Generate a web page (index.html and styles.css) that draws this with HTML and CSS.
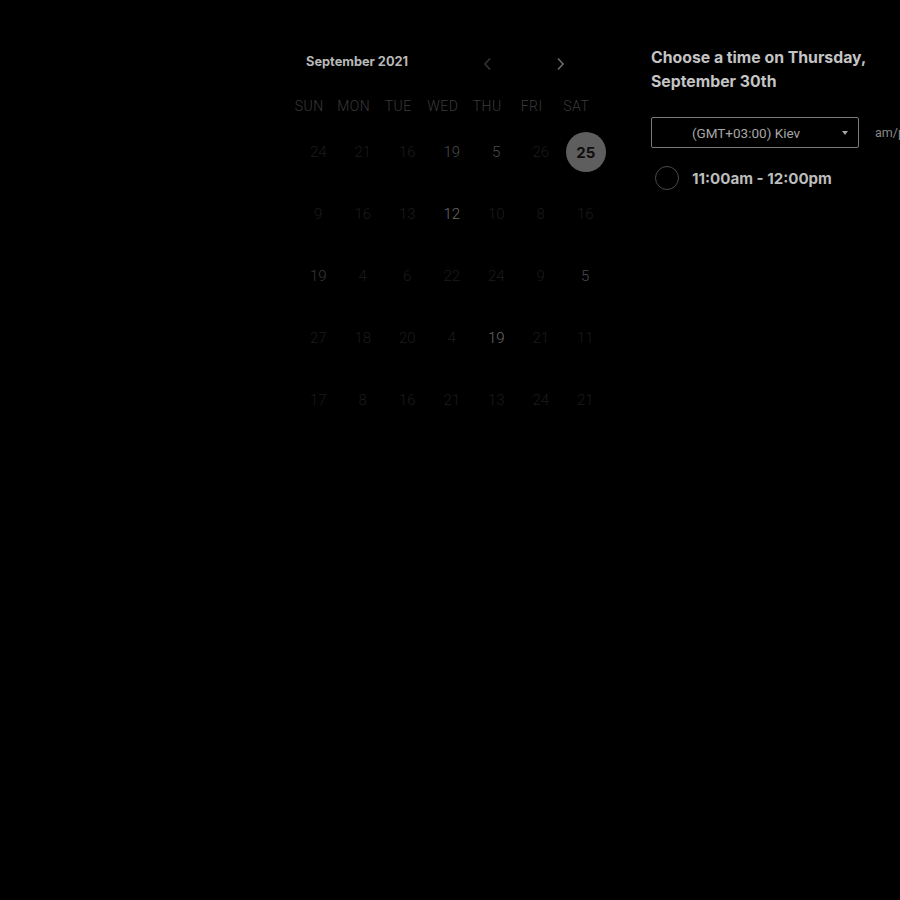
FILE: index.html
```html
<!DOCTYPE html>
<html lang="en">
<head>
<meta charset="utf-8">
<title>Schedule</title>
<link rel="stylesheet" href="styles.css">
</head>
<body>
<div class="page">
  <section class="calendar">
    <div class="cal-head">
      <span class="cal-title">September 2021</span>
      <div class="cal-nav">
        <svg class="chev prev" width="10" height="14" viewBox="0 0 10 14"><path d="M7 1.5 L2 7 L7 12.5" fill="none" stroke="currentColor" stroke-width="1.6"/></svg>
        <svg class="chev next" width="10" height="14" viewBox="0 0 10 14"><path d="M3 1.5 L8 7 L3 12.5" fill="none" stroke="currentColor" stroke-width="1.6"/></svg>
      </div>
    </div>
    <div class="weekdays">
      <span>SUN</span><span>MON</span><span>TUE</span><span>WED</span><span>THU</span><span>FRI</span><span>SAT</span>
    </div>
    <div class="dates">
      <span class="d0">24</span><span class="d0">21</span><span class="d0">16</span><span class="d2">19</span><span class="d2">5</span><span class="d0">26</span><span class="sel"><b>25</b></span>
      <span class="d0">9</span><span class="d0">16</span><span class="d0">13</span><span class="d3">12</span><span class="d0">10</span><span class="d0">8</span><span class="d0">16</span>
      <span class="d1">19</span><span class="d0">4</span><span class="d0">6</span><span class="d0">22</span><span class="d0">24</span><span class="d0">9</span><span class="d2">5</span>
      <span class="d0">27</span><span class="d0">18</span><span class="d0">20</span><span class="d0">4</span><span class="d3">19</span><span class="d0">21</span><span class="d0">11</span>
      <span class="d0">17</span><span class="d0">8</span><span class="d0">16</span><span class="d0">21</span><span class="d0">13</span><span class="d0">24</span><span class="d0">21</span>
    </div>
  </section>
  <section class="times">
    <h2 class="times-title">Choose a time on Thursday, September 30th</h2>
    <div class="tz-row">
      <div class="tz-select">
        <span>(GMT+03:00) Kiev</span>
        <span class="caret"></span>
      </div>
      <span class="fmt">am/pm</span>
    </div>
    <label class="slot">
      <span class="radio"></span>
      <span class="slot-text">11:00am - 12:00pm</span>
    </label>
  </section>
</div>
</body>
</html>
```
FILE: styles.css
```css
html, body {
  margin: 0;
  padding: 0;
  background: #000;
  overflow: hidden;
  height: 100%;
}
body {
  font-family: Inter, "Liberation Sans", sans-serif;
  color: #bbb;
}
.page {
  display: flex;
  align-items: flex-start;
  padding-left: 296px;
  width: 900px;
  box-sizing: border-box;
  white-space: nowrap;
}
.calendar {
  width: 311px;
  padding-top: 49px;
  flex: none;
}
.cal-head {
  display: flex;
  align-items: center;
  height: 24px;
}
.cal-title {
  margin-left: 10px;
  font-size: 12.8px;
  font-weight: 700;
  color: #b8b8b8;
  width: 176px;
}
.cal-nav {
  display: flex;
  gap: 62px;
  padding-top: 6px;
  margin-left: 1px;
}
.chev { display: block; }
.chev.prev { color: #363636; }
.chev.next { color: #6a6a6a; }
.weekdays {
  display: grid;
  grid-template-columns: repeat(7, 44.5px);
  margin-top: 23px;
  margin-left: -9px;
  height: 20px;
  line-height: 20px;
  font-family: Roboto, "Liberation Sans", sans-serif;
  font-weight: 300;
  font-size: 14px;
  letter-spacing: 0.5px;
  color: #3a3a3a;
  text-align: center;
}
.dates {
  display: grid;
  grid-template-columns: repeat(7, 44.5px);
  grid-auto-rows: 62px;
  margin-top: 5px;
  font-family: Roboto, "Liberation Sans", sans-serif;
  font-weight: 300;
  font-size: 15px;
}
.dates span {
  display: flex;
  align-items: center;
  justify-content: center;
}
.d0 { color: #1b1b1b; }
.d1 { color: #3a3a3a; }
.d2 { color: #4c4c4c; }
.d3 { color: #6a6a6a; }
.dates .sel b {
  display: flex;
  align-items: center;
  justify-content: center;
  width: 40px;
  height: 40px;
  border-radius: 50%;
  background: #5e5e5e;
  color: #0e0e0e;
  font-family: Inter, "Liberation Sans", sans-serif;
  font-weight: 700;
  font-size: 15px;
  margin-left: 1px;
}
.times {
  margin-left: 44px;
  padding-top: 46px;
}
.times-title {
  margin: 0;
  width: 240px;
  white-space: normal;
  font-size: 15.8px;
  line-height: 24px;
  font-weight: 700;
  color: #c4c4c4;
}
.tz-row {
  display: flex;
  align-items: center;
  gap: 16px;
  margin-top: 23px;
}
.tz-select {
  display: flex;
  align-items: center;
  justify-content: center;
  position: relative;
  width: 208px;
  height: 31px;
  box-sizing: border-box;
  border: 1px solid #7a7a7a;
  border-radius: 2px;
  padding-right: 18px;
  font-family: Roboto, "Liberation Sans", sans-serif;
  font-size: 13.5px;
  color: #a6a6a6;
}
.caret {
  position: absolute;
  right: 10px;
  top: 13px;
  width: 0;
  height: 0;
  border-left: 3.5px solid transparent;
  border-right: 3.5px solid transparent;
  border-top: 4px solid #a6a6a6;
}
.fmt {
  font-family: Roboto, "Liberation Sans", sans-serif;
  font-size: 12.5px;
  color: #888;
}
.slot {
  display: flex;
  align-items: center;
  margin-top: 18px;
  margin-left: 4px;
}
.radio {
  width: 24px;
  height: 24px;
  box-sizing: border-box;
  border: 1.5px solid #4a4a4a;
  border-radius: 50%;
}
.slot-text {
  margin-left: 13px;
  font-size: 15.1px;
  font-weight: 700;
  color: #bdbdbd;
}
```
